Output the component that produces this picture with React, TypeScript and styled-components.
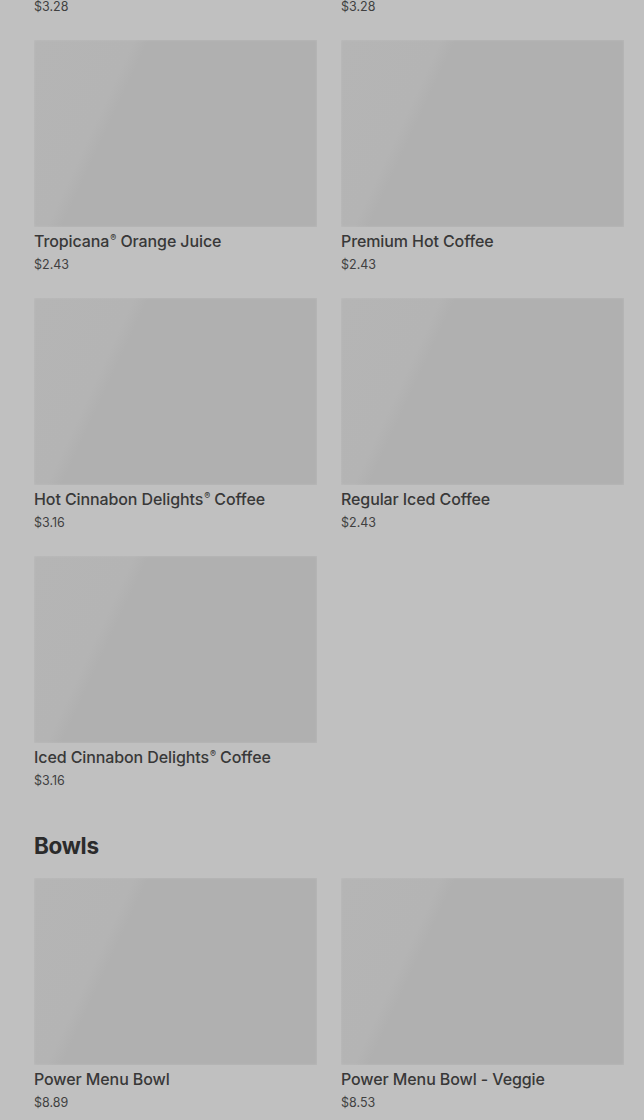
import React from "react";
import styled, { createGlobalStyle } from "styled-components";

const GlobalStyle = createGlobalStyle`
  html, body {
    margin: 0;
    padding: 0;
    background: #c0c0c0;
    font-family: Inter, "Noto Sans", Arial, sans-serif;
    overflow: hidden;
  }
`;

const Page = styled.div`
  padding: 0 20px 0 34px;
  margin-top: -218px;
`;

const Section = styled.section`
  & + & {
    margin-top: 40px;
  }
`;

const SectionTitle = styled.h2`
  margin: 0 0 16px;
  font-size: 22.5px;
  line-height: 32px;
  font-weight: 700;
  color: #2b2b2b;
  letter-spacing: -0.3px;
`;

const Grid = styled.div`
  display: grid;
  grid-template-columns: repeat(2, 283px);
  column-gap: 24px;
  row-gap: 24px;
`;

const Card = styled.div`
  display: flex;
  flex-direction: column;
`;

const Thumb = styled.div`
  height: 187px;
  background: linear-gradient(
    115deg,
    #b5b5b5 0%,
    #b4b4b4 27%,
    #b0b0b0 31%,
    #b0b0b0 100%
  );
  box-shadow: inset 0 0 3px rgba(255, 255, 255, 0.15);
`;

const Name = styled.div`
  margin-top: 4px;
  font-size: 16px;
  line-height: 20px;
  font-weight: 500;
  color: #383838;
  letter-spacing: -0.1px;
`;

const Reg = styled.sup`
  font-size: 9px;
  line-height: 0;
  vertical-align: 6px;
  margin-left: 1px;
`;

const Price = styled.div`
  margin-top: 5px;
  font-size: 12.5px;
  line-height: 18px;
  color: #404040;
`;

type Item = { name: string; price: string };

const drinks: Item[] = [
  { name: "Iced Premium Coffee", price: "$3.28" },
  { name: "Hot Chocolate", price: "$3.28" },
  { name: "Tropicana® Orange Juice", price: "$2.43" },
  { name: "Premium Hot Coffee", price: "$2.43" },
  { name: "Hot Cinnabon Delights® Coffee", price: "$3.16" },
  { name: "Regular Iced Coffee", price: "$2.43" },
  { name: "Iced Cinnabon Delights® Coffee", price: "$3.16" },
];

const bowls: Item[] = [
  { name: "Power Menu Bowl", price: "$8.89" },
  { name: "Power Menu Bowl - Veggie", price: "$8.53" },
];

const renderName = (name: string) =>
  name.split("®").map((part, i, arr) => (
    <React.Fragment key={i}>
      {part}
      {i < arr.length - 1 && <Reg>®</Reg>}
    </React.Fragment>
  ));

const MenuCard: React.FC<{ item: Item }> = ({ item }) => (
  <Card>
    <Thumb />
    <Name>{renderName(item.name)}</Name>
    <Price>{item.price}</Price>
  </Card>
);

export default function App() {
  return (
    <>
      <GlobalStyle />
      <Page>
        <Section>
          <Grid>
            {drinks.map((d) => (
              <MenuCard key={d.name} item={d} />
            ))}
          </Grid>
        </Section>
        <Section>
          <SectionTitle>Bowls</SectionTitle>
          <Grid>
            {bowls.map((b) => (
              <MenuCard key={b.name} item={b} />
            ))}
          </Grid>
        </Section>
      </Page>
    </>
  );
}
